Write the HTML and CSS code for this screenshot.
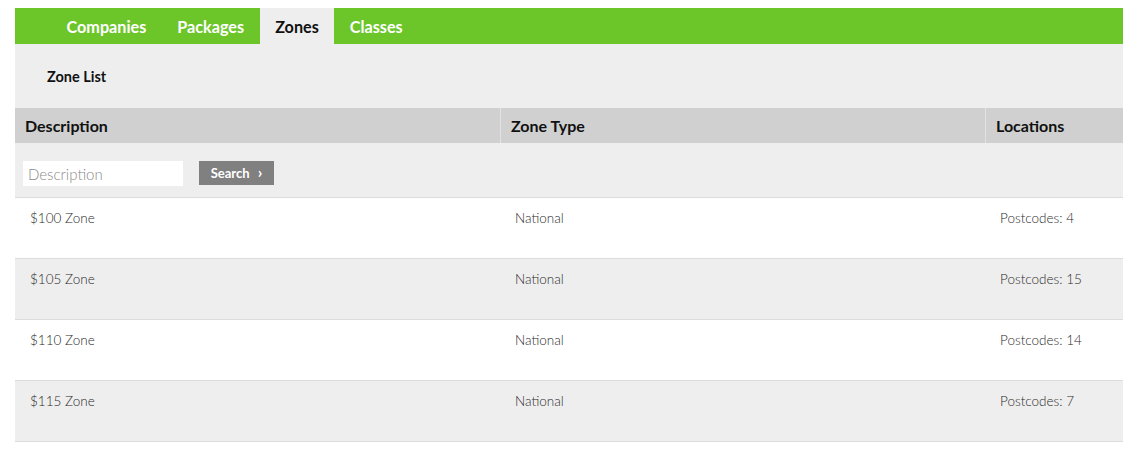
FILE: index.html
```html
<!DOCTYPE html>
<html>
<head>
<meta charset="utf-8">
<link rel="stylesheet" href="styles.css">
</head>
<body>
<div class="page">
  <nav class="tabs">
    <a class="tab">Companies</a>
    <a class="tab">Packages</a>
    <a class="tab active">Zones</a>
    <a class="tab">Classes</a>
  </nav>
  <div class="title-bar">Zone List</div>
  <div class="table">
    <div class="row head">
      <div class="cell">Description</div>
      <div class="cell">Zone Type</div>
      <div class="cell">Locations</div>
    </div>
    <div class="filter">
      <input class="desc-input" type="text" placeholder="Description">
      <button class="search-btn">Search <span class="chev">&#8250;</span></button>
    </div>
    <div class="row data odd">
      <div class="cell">$100 Zone</div>
      <div class="cell">National</div>
      <div class="cell">Postcodes: 4</div>
    </div>
    <div class="row data even">
      <div class="cell">$105 Zone</div>
      <div class="cell">National</div>
      <div class="cell">Postcodes: 15</div>
    </div>
    <div class="row data odd">
      <div class="cell">$110 Zone</div>
      <div class="cell">National</div>
      <div class="cell">Postcodes: 14</div>
    </div>
    <div class="row data even">
      <div class="cell">$115 Zone</div>
      <div class="cell">National</div>
      <div class="cell">Postcodes: 7</div>
    </div>
  </div>
</div>
</body>
</html>
```
FILE: styles.css
```css
html, body {
  margin: 0;
  padding: 0;
  background: #ffffff;
}
body {
  padding: 8px 0 0 15px;
  font-family: "Lato", "Open Sans", sans-serif;
  color: #222;
}
.page {
  width: 1108px;
}
.tabs {
  display: flex;
  height: 36px;
  background: #6cc62a;
  padding-left: 36px;
}
.tab {
  display: flex;
  align-items: center;
  padding: 0 15.5px;
  color: #ffffff;
  font-weight: 700;
  font-size: 16.2px;
}
.tab.active {
  background: #eeeeee;
  color: #111;
}
.title-bar {
  height: 64px;
  background: #eeeeee;
  display: flex;
  align-items: center;
  padding-left: 32px;
  font-weight: 700;
  font-size: 14.5px;
  color: #111;
}
.row {
  display: grid;
  grid-template-columns: 485px 485px 1fr;
}
.head {
  height: 35px;
  background: #d0d0d0;
}
.head .cell {
  display: flex;
  align-items: center;
  padding-left: 10px;
  font-weight: 700;
  font-size: 16px;
  color: #111;
}
.head .cell + .cell {
  border-left: 1px solid #e2e2e2;
}
.filter {
  background: #eeeeee;
  border-bottom: 1px solid #dcdcdc;
  display: flex;
  align-items: flex-start;
  padding: 18px 0 0 8px;
  box-sizing: border-box;
  height: 55px;
  gap: 16px;
}
.desc-input {
  width: 160px;
  height: 25px;
  box-sizing: border-box;
  border: none;
  background: #ffffff;
  padding: 0 5px;
  font-family: "Lato", sans-serif;
  font-size: 15px;
  font-weight: 300;
  outline: none;
}
.desc-input::placeholder {
  color: #8a8a8a;
}
.search-btn {
  width: 75px;
  height: 24px;
  border: none;
  background: #808080;
  color: #ffffff;
  font-family: "Lato", sans-serif;
  font-weight: 700;
  font-size: 13px;
  padding: 0;
  display: flex;
  align-items: center;
  justify-content: center;
  gap: 8px;
}
.chev {
  font-size: 16px;
  line-height: 1;
  margin-top: -2px;
}
.data {
  height: 61px;
  box-sizing: border-box;
  border-bottom: 1px solid #dcdcdc;
}
.data.odd { background: #ffffff; }
.data.even { background: #eeeeee; }
.data .cell {
  padding: 12px 0 0 15px;
  font-size: 13.5px;
  font-weight: 300;
  color: #2a2a2a;
}
```
